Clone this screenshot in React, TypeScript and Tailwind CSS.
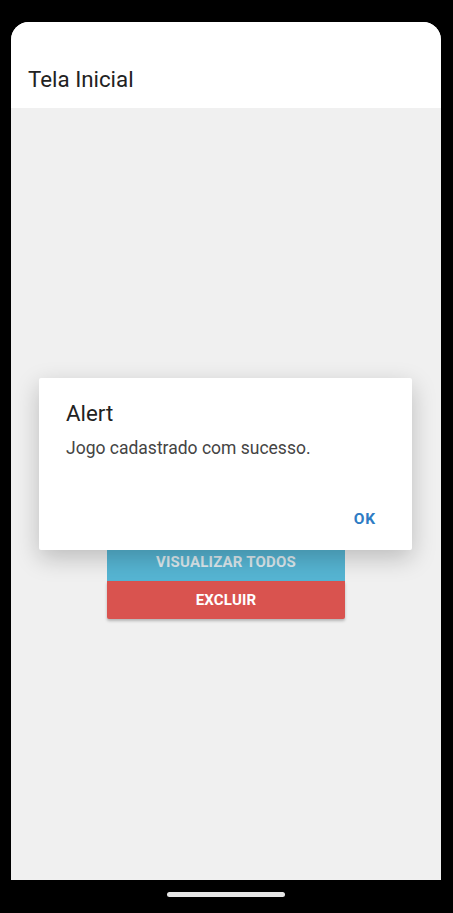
import React from "react";

export default function App() {
  return (
    <div
      className="w-[453px] h-[913px] bg-black pt-[22px] pl-[11px] pr-[12px] flex flex-col"
      style={{ fontFamily: "Roboto, 'Noto Sans', sans-serif" }}
    >
      <div className="h-[858px] w-full rounded-t-[18px] overflow-hidden flex flex-col bg-[#f0f0f0]">
        <div className="h-[86px] bg-white flex items-end pl-[17px] pb-[15px]">
          <span className="text-[22.3px] leading-[28px] text-[#222]">Tela Inicial</span>
        </div>
        <div className="flex-1 relative bg-[#f0f0f0]">
          <div className="flex flex-col items-center pt-[435px]">
            <div className="w-[238px] h-[38px] bg-[#56b5d3] flex items-center justify-center pt-[1px] text-[15px] font-bold tracking-[0.2px] text-[#dde9ee]">
              VISUALIZAR TODOS
            </div>
            <div className="w-[238px] h-[38px] bg-[#d9534f] rounded-b-[2px] shadow-[0_2px_3px_rgba(0,0,0,0.25)] flex items-center justify-center pt-[1px] text-[15px] font-bold tracking-[0.2px] text-white">
              EXCLUIR
            </div>
          </div>
          <div className="absolute left-[28px] top-[270px] w-[373px] h-[172px] bg-white rounded-[2px] shadow-[0_8px_24px_rgba(0,0,0,0.22)] flex flex-col px-[27px] pt-[21px]">
            <div className="text-[22.3px] leading-[28px] text-[#222]">Alert</div>
            <div className="mt-[10px] text-[17.5px] leading-[22px] text-[#444]">Jogo cadastrado com sucesso.</div>
            <div className="flex justify-end mt-[49px] pr-[9px]">
              <span className="text-[15.5px] font-bold tracking-[0.9px] text-[#2e7cc4]">OK</span>
            </div>
          </div>
        </div>
      </div>
      <div className="flex-1 flex items-center justify-center pb-[4px]">
        <div className="w-[118px] h-[5px] rounded-full bg-[#e6e6e6]" />
      </div>
    </div>
  );
}
